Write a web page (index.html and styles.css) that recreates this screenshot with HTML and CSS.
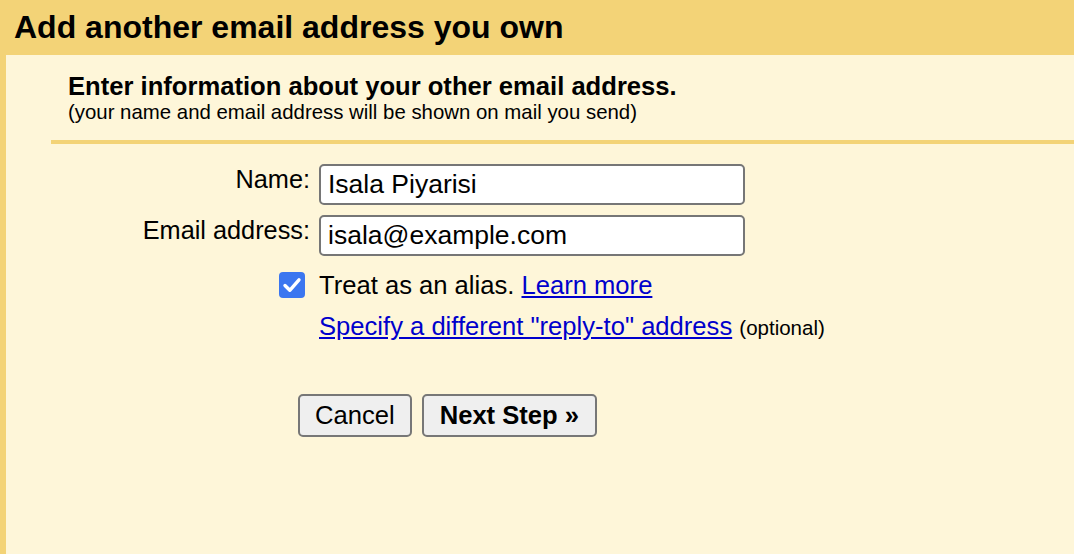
FILE: index.html
```html
<!DOCTYPE html>
<html>
<head>
<meta charset="utf-8">
<link rel="stylesheet" href="styles.css">
</head>
<body>
<div class="page">
  <div class="header">Add another email address you own</div>
  <div class="panel">
    <div class="intro">
      <div class="intro-title">Enter information about your other email address.</div>
      <div class="intro-sub">(your name and email address will be shown on mail you send)</div>
    </div>
    <div class="sep"></div>
    <div class="form">
      <label class="lbl" for="nm">Name:</label>
      <div class="field"><input id="nm" class="txt" type="text" value="Isala Piyarisi"></div>
      <label class="lbl" for="em">Email address:</label>
      <div class="field"><input id="em" class="txt" type="text" value="isala@example.com"></div>
      <div class="chk-cell">
        <span class="chk"><svg width="26" height="26" viewBox="0 0 26 26"><rect x="0" y="0" width="26" height="26" rx="4" fill="#3b76f0"/><path d="M6 13.5 L10.8 18.3 L20 7.8" fill="none" stroke="#fff" stroke-width="3.4" stroke-linecap="round" stroke-linejoin="round"/></svg></span>
      </div>
      <div class="field alias">Treat as an alias. <a href="#">Learn more</a></div>
      <div></div>
      <div class="field reply"><a href="#">Specify a different "reply-to" address</a> <span class="opt">(optional)</span></div>
    </div>
    <div class="buttons">
      <button class="btn">Cancel</button>
      <button class="btn btn-bold">Next Step »</button>
    </div>
  </div>
</div>
</body>
</html>
```
FILE: styles.css
```css
html, body {
  margin: 0;
  padding: 0;
  background: #fef6d9;
  font-family: "Liberation Sans", Arial, sans-serif;
  color: #000;
}
.page {
  width: 1074px;
  height: 554px;
  overflow: hidden;
}
.header {
  height: 55px;
  line-height: 55px;
  background: #f3d377;
  padding-left: 14px;
  font-size: 32px;
  font-weight: bold;
  white-space: nowrap;
}
.panel {
  border-left: 6px solid #f3d377;
  height: 499px;
  background: #fef6d9;
}
.intro {
  padding-left: 62px;
  padding-top: 17px;
}
.intro-title {
  font-size: 25.6px;
  font-weight: bold;
  line-height: 28px;
}
.intro-sub {
  font-size: 20.4px;
  line-height: 24px;
}
.sep {
  margin-left: 45px;
  margin-top: 16px;
  height: 4px;
  background: #f3d377;
}
.form {
  display: grid;
  grid-template-columns: 304px 426px;
  column-gap: 9px;
  margin-top: 20px;
}
.lbl {
  text-align: right;
  font-size: 25.3px;
  line-height: 30px;
}
.field {
  margin-bottom: 10px;
  white-space: nowrap;
}
.txt {
  box-sizing: border-box;
  width: 426px;
  height: 41px;
  border: 2px solid #767676;
  border-radius: 5px;
  background: #fff;
  font-family: "Liberation Sans", Arial, sans-serif;
  font-size: 26.5px;
  padding: 0 7px;
  color: #000;
  display: block;
  outline: none;
}
.chk-cell {
  display: flex;
  justify-content: flex-end;
  padding-right: 5px;
  padding-top: 6px;
}
.chk {
  display: block;
  width: 26px;
  height: 26px;
}
.chk svg { display: block; }
.alias {
  font-size: 25.6px;
  line-height: 30px;
  padding-top: 4px;
  margin-bottom: 0;
}
.reply {
  font-size: 25.6px;
  line-height: 30px;
  padding-top: 11px;
}
a {
  color: #0000cc;
  text-decoration: underline;
}
.opt {
  font-size: 20.5px;
}
.buttons {
  display: flex;
  gap: 10px;
  padding-left: 292px;
  margin-top: 41px;
}
.btn {
  box-sizing: border-box;
  height: 43px;
  border: 2px solid #777;
  border-radius: 5px;
  background: #efefef;
  font-family: "Liberation Sans", Arial, sans-serif;
  font-size: 25.6px;
  color: #000;
  padding: 0 15px;
}
.btn-bold {
  font-weight: bold;
  padding: 0 16px;
}
```
